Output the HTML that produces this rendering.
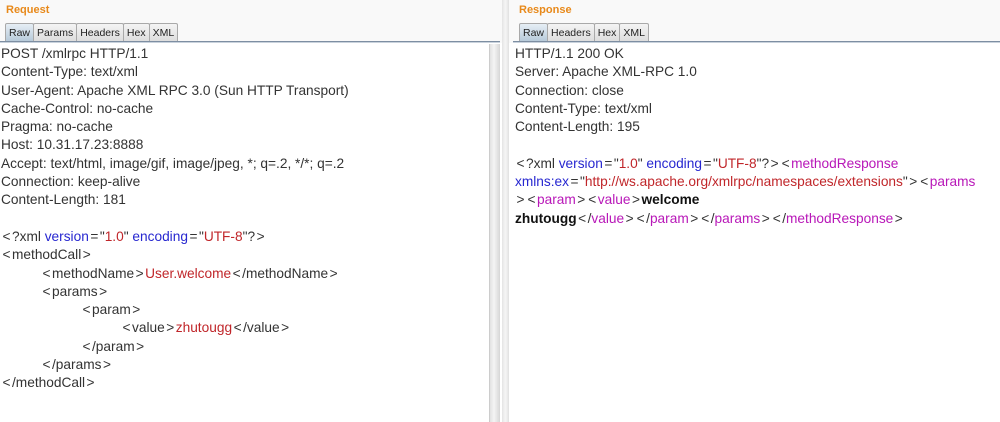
<!DOCTYPE html>
<html><head><meta charset="utf-8"><style>
*{margin:0;padding:0;box-sizing:border-box}
body{width:1000px;height:422px;overflow:hidden;background:#fff;font-family:"Liberation Sans",sans-serif;position:relative}
.hdr{position:absolute;top:0;height:43px;background:#f9f9f9}
.title{position:absolute;top:4px;font:bold 11px "Liberation Sans",sans-serif;color:#e8891a}
.tabs{position:absolute;top:23px;display:flex;height:19px}
.tab{font-size:10.5px;color:#222;padding:3px 3px 0;border:1px solid #a9a9a9;border-bottom:none;margin-right:-1px;background:linear-gradient(#f4f4f4,#dcdcdc);border-radius:2px 2px 0 0}
.tab.sel{background:linear-gradient(#e6eef5,#b4c8d8);}
.line{position:absolute;top:41px;height:2px;background:#7d8ea2;border-bottom:1px solid #c9d2dc}
.txt{position:absolute;top:45px;font-size:13.7px;line-height:18.3px;color:#333;white-space:pre}
.b{color:#2727d0}.r{color:#c0262a}.m{color:#b817b8}.k{font-weight:bold;color:#111}
.s{margin:0 1.5px}
.i{display:inline-block;width:40px}
.sb{position:absolute;left:489px;top:44px;width:11px;height:378px;background:linear-gradient(90deg,#e2e2e2,#f4f4f4 40%,#d6d6d6);border-left:1px solid #ccc}
.div{position:absolute;left:502px;top:0;width:7px;height:422px;background:linear-gradient(90deg,#e4e4e4,#f6f6f6,#e0e0e0)}
</style></head><body>
<div class="hdr" style="left:0;width:502px"></div>
<div class="hdr" style="left:509px;width:491px"></div>
<div class="title" style="left:6px">Request</div>
<div class="title" style="left:519px">Response</div>
<div class="tabs" style="left:5px"><div class="tab sel">Raw</div><div class="tab">Params</div><div class="tab">Headers</div><div class="tab">Hex</div><div class="tab">XML</div></div>
<div class="tabs" style="left:519px"><div class="tab sel">Raw</div><div class="tab">Headers</div><div class="tab">Hex</div><div class="tab">XML</div></div>
<div class="line" style="left:0;width:500px"></div>
<div class="line" style="left:513px;width:487px"></div>
<div class="txt" style="left:1px">POST /xmlrpc HTTP/1.1
Content-Type: text/xml
User-Agent: Apache XML RPC 3.0 (Sun HTTP Transport)
Cache-Control: no-cache
Pragma: no-cache
Host: 10.31.17.23:8888
Accept: text/html, image/gif, image/jpeg, *; q=.2, */*; q=.2
Connection: keep-alive
Content-Length: 181

<span class="s">&lt;</span>?xml <span class="b">version</span><span class="s">=</span>"<span class="r">1.0</span>" <span class="b">encoding</span><span class="s">=</span>"<span class="r">UTF-8</span>"?<span class="s">&gt;</span>
<span class="s">&lt;</span>methodCall<span class="s">&gt;</span>
<span class="i"></span><span class="s">&lt;</span>methodName<span class="s">&gt;</span><span class="r">User.welcome</span><span class="s">&lt;</span>/methodName<span class="s">&gt;</span>
<span class="i"></span><span class="s">&lt;</span>params<span class="s">&gt;</span>
<span class="i"></span><span class="i"></span><span class="s">&lt;</span>param<span class="s">&gt;</span>
<span class="i"></span><span class="i"></span><span class="i"></span><span class="s">&lt;</span>value<span class="s">&gt;</span><span class="r">zhutougg</span><span class="s">&lt;</span>/value<span class="s">&gt;</span>
<span class="i"></span><span class="i"></span><span class="s">&lt;</span>/param<span class="s">&gt;</span>
<span class="i"></span><span class="s">&lt;</span>/params<span class="s">&gt;</span>
<span class="s">&lt;</span>/methodCall<span class="s">&gt;</span></div>
<div class="txt" style="left:515px">HTTP/1.1 200 OK
Server: Apache XML-RPC 1.0
Connection: close
Content-Type: text/xml
Content-Length: 195

<span class="s">&lt;</span>?xml <span class="b">version</span><span class="s">=</span>"<span class="r">1.0</span>" <span class="b">encoding</span><span class="s">=</span>"<span class="r">UTF-8</span>"?<span class="s">&gt;</span><span class="s">&lt;</span><span class="m">methodResponse</span>
<span class="b">xmlns:ex</span><span class="s">=</span>"<span class="r">http://ws.apache.org/xmlrpc/namespaces/extensions</span>"<span class="s">&gt;</span><span class="s">&lt;</span><span class="m">params</span>
<span class="s">&gt;</span><span class="s">&lt;</span><span class="m">param</span><span class="s">&gt;</span><span class="s">&lt;</span><span class="m">value</span><span class="s">&gt;</span><span class="k">welcome</span>
<span class="k">zhutougg</span><span class="s">&lt;</span>/<span class="m">value</span><span class="s">&gt;</span><span class="s">&lt;</span>/<span class="m">param</span><span class="s">&gt;</span><span class="s">&lt;</span>/<span class="m">params</span><span class="s">&gt;</span><span class="s">&lt;</span>/<span class="m">methodResponse</span><span class="s">&gt;</span></div>
<div class="sb"></div>
<div class="div"></div>
</body></html>
